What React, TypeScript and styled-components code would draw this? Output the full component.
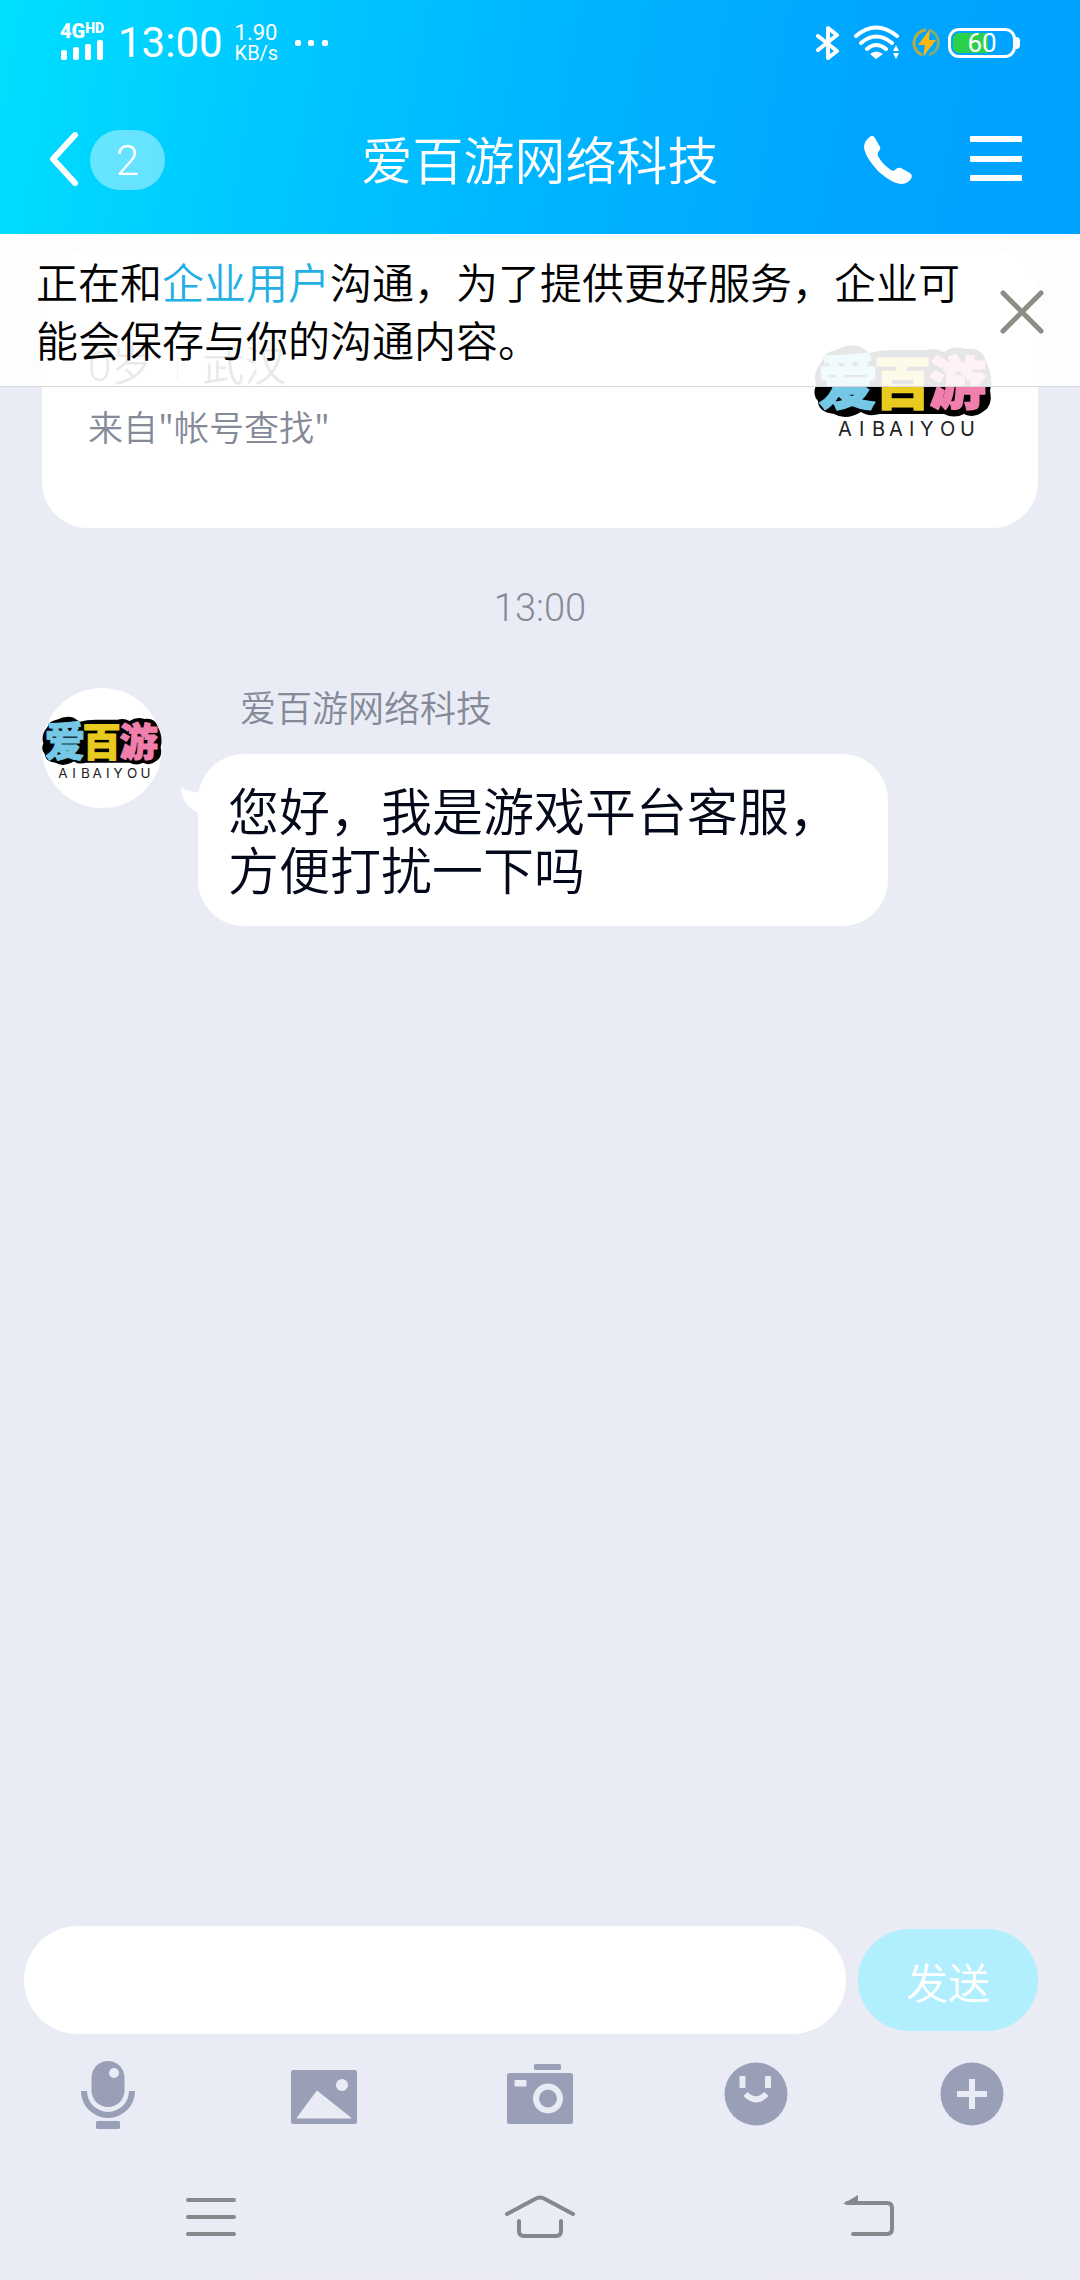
import React from 'react';
import styled, { createGlobalStyle } from 'styled-components';

const GlobalStyle = createGlobalStyle`
  * { box-sizing: border-box; }
  body {
    margin: 0;
    background: #e9ecf5;
    font-family: Roboto, "Noto Sans CJK SC", sans-serif;
    font-weight: 350;
  }
  button, input { font: inherit; border: 0; padding: 0; background: none; }
  svg { display: block; flex: none; }
`;

const Page = styled.div`
  display: flex;
  flex-direction: column;
  min-height: 100vh;
  background: linear-gradient(#e9ecf5 90%, #ebecf5);
`;

const Top = styled.header`
  color: #fff;
  background: linear-gradient(100deg, #00dfff 0%, #00c8ff 25%, #00b4ff 52%, #00a5ff 80%, #00a2ff 100%);
`;

const StatusBar = styled.div`
  display: flex;
  align-items: center;
  justify-content: space-between;
  height: 86px;
  padding: 0 60px;
`;

const StatusGroup = styled.div<{ $gap: number }>`
  display: flex;
  align-items: center;
  gap: ${(p) => p.$gap}px;
`;

const Signal = styled.div`
  display: flex;
  flex-direction: column;
  width: 46px;
  padding-bottom: 4px;
  font-weight: 900;
  font-size: 20px;
  line-height: 18px;
`;

const NetType = styled.span`
  display: flex;
  align-items: flex-start;
  small { font-size: 14px; line-height: 12px; }
`;

const Clock = styled.time`
  font-size: 42px;
  line-height: 48px;
  font-weight: 400;
`;

const Rate = styled.span`
  display: flex;
  flex-direction: column;
  font-size: 22px;
  line-height: 20px;
  font-weight: 400;
  small { font-size: 20px; }
`;

const Battery = styled.span`
  display: flex;
  align-items: center;
`;

const BatteryBody = styled.span`
  display: flex;
  align-items: center;
  justify-content: center;
  width: 68px;
  height: 30px;
  border: 3px solid #fff;
  border-radius: 11px;
  background: linear-gradient(90deg, #2bd14b 60%, transparent 60%) content-box;
  padding: 2px;
  font-size: 26px;
  line-height: 24px;
  font-weight: 400;
`;

const BatteryTip = styled.span`
  width: 4px;
  height: 12px;
  border-radius: 0 4px 4px 0;
  background: #fff;
`;

const TitleBar = styled.div`
  display: grid;
  grid-template-columns: 1fr auto 1fr;
  align-items: center;
  height: 148px;
  padding: 0 50px;
`;

const BackButton = styled.button`
  display: flex;
  align-items: center;
  gap: 12px;
  color: #fff;
  justify-self: start;
`;

const Unread = styled.span`
  width: 75px;
  height: 60px;
  border-radius: 30px;
  background: rgba(255, 255, 255, 0.4);
  font-size: 42px;
  line-height: 62px;
  text-align: center;
`;

const Title = styled.h1`
  margin: 0;
  padding-top: 6px;
  font-size: 51px;
  line-height: 60px;
  font-weight: inherit;
`;

const Actions = styled.div`
  display: flex;
  align-items: center;
  justify-content: flex-end;
  gap: 58px;
  padding-right: 8px;
`;

const IconButton = styled.button`
  display: flex;
  color: inherit;
`;

const Chat = styled.main`
  position: relative;
  display: flex;
  flex-direction: column;
  flex: 1;
  padding: 16px 42px 0;
`;

const Notice = styled.aside`
  position: absolute;
  top: 0;
  left: 0;
  right: 0;
  display: flex;
  align-items: center;
  justify-content: space-between;
  gap: 24px;
  padding: 22px 36px 14px;
  border-bottom: 1px solid #d9d9dc;
  background: rgba(255, 255, 255, 0.9);
  color: #8f8c86;
`;

const NoticeText = styled.p`
  margin: 0;
  max-width: 930px;
  color: #000;
  font-size: 42px;
  line-height: 58px;
`;

const NoticeLink = styled.a`
  color: #23b0e6;
  text-decoration: none;
`;

const Card = styled.section`
  display: flex;
  align-items: center;
  justify-content: space-between;
  padding: 53px 46px 47px;
  border-radius: 46px;
  background: #fff;
`;

const CardInfo = styled.div`
  padding-top: 8px;
  line-height: 60px;
`;

const CardFacts = styled.div`
  display: flex;
  align-items: center;
  gap: 24px;
  color: #222;
  font-size: 42px;
`;

const Divider = styled.span`
  width: 1px;
  height: 28px;
  background: #777;
`;

const CardSource = styled.div`
  color: #858a99;
  font-family: "Noto Sans CJK SC", sans-serif;
  font-size: 35px;
  line-height: 58px;
`;

const Stamp = styled.time`
  align-self: center;
  margin: 56px 0 54px;
  color: #858a99;
  font-size: 38px;
  line-height: 48px;
`;

const Message = styled.article`
  display: flex;
  align-items: flex-start;
  gap: 36px;
  margin-top: 2px;
`;

const Avatar = styled.div`
  width: 120px;
  height: 120px;
  border-radius: 50%;
  background: #fff;
`;

const Sender = styled.div`
  padding: 0 42px 22px;
  color: #858a99;
  font-size: 36px;
  line-height: 44px;
`;

const Bubble = styled.div`
  position: relative;
  width: fit-content;
  max-width: 690px;
  padding: 30px 48px 24px 30px;
  border-radius: 46px;
  background: #fff;
  color: #03081a;
  font-size: 51px;
  line-height: 59px;
`;

const Tail = styled.svg`
  position: absolute;
  left: -17px;
  top: 33px;
`;

const Composer = styled.form`
  display: flex;
  align-items: center;
  gap: 12px;
  padding: 0 42px 0 24px;
`;

const Field = styled.input`
  flex: 1;
  min-width: 0;
  height: 108px;
  padding: 0 40px;
  border-radius: 54px;
  background: #fff;
  font-size: 42px;
`;

const Send = styled.button`
  width: 180px;
  height: 102px;
  border-radius: 51px;
  background: #b1eefe;
  color: #fff;
  font-size: 42px;
`;

const Tools = styled.div`
  display: grid;
  grid-template-columns: repeat(5, 1fr);
  place-items: center;
  height: 120px;
  color: #999fb6;
`;

const SystemNav = styled.nav`
  display: flex;
  align-items: center;
  justify-content: space-between;
  height: 126px;
  padding: 0 186px;
  color: #87888b;
`;

const LOGO_GLYPHS = [
  { char: '爱', x: 4, y: 101, size: 60, color: '#74c8e6' },
  { char: '百', x: 60, y: 101, size: 57, color: '#e9cb1f' },
  { char: '游', x: 115, y: 101, size: 57, color: '#f07fae' },
];

function Logo({ size }: { size: number }) {
  return (
    <svg width={size} height={size} viewBox="0 0 178 178" overflow="visible" role="img" aria-label="爱百游 AIBAIYOU">
      <path
        d="M8 58Q10 49 22 47Q36 40 47 44L56 50Q66 47 80 47H112Q122 44 130 49Q140 42 152 46Q168 44 172 58Q180 74 176 88Q179 102 170 108Q160 116 150 111Q140 116 130 111H66Q54 114 47 109Q32 118 20 111Q4 109 4 98Q-2 92 2 82Q-2 70 8 58Z"
        fill="#000"
      />
      <g fontFamily='"Noto Sans CJK SC"' fontWeight="900" strokeLinejoin="round" strokeWidth="1.5">
        {LOGO_GLYPHS.map((g) => (
          <text key={g.char} x={g.x} y={g.y} fontSize={g.size} fill={g.color} stroke={g.color}>
            {g.char}
          </text>
        ))}
      </g>
      <text x="24 45 58 75 95 106 126 146" y="133" fontFamily="Inter" fontWeight="400" fontSize="20" fill="#222">
        AIBAIYOU
      </text>
    </svg>
  );
}

export default function App() {
  return (
    <Page>
      <GlobalStyle />
      <Top>
        <StatusBar>
          <StatusGroup $gap={12}>
            <Signal>
              <NetType>4G<small>HD</small></NetType>
              <svg width="44" height="20" viewBox="0 0 44 20" fill="currentColor">
                <rect x="1" y="10" width="6" height="10" rx="2" />
                <rect x="13" y="7" width="6" height="13" rx="2" />
                <rect x="25" y="4" width="6" height="16" rx="2" />
                <rect x="37" y="0" width="6" height="20" rx="2" />
              </svg>
            </Signal>
            <Clock>13:00</Clock>
            <Rate>
              <span>1.90</span>
              <small>KB/s</small>
            </Rate>
            <svg width="40" height="8" viewBox="0 0 40 8" fill="currentColor">
              <rect x="5" y="1" width="6" height="6" rx="2" />
              <rect x="18" y="1" width="6" height="6" rx="2" />
              <rect x="32" y="1" width="6" height="6" rx="2" />
            </svg>
          </StatusGroup>
          <StatusGroup $gap={12}>
            <svg width="24" height="36" viewBox="0 0 24 36" fill="none" stroke="currentColor" strokeWidth="4" strokeLinecap="round" strokeLinejoin="round">
              <path d="M2 11L21 26L12 33V3L21 10L2 25" />
            </svg>
            <svg width="48" height="36" viewBox="0 0 48 36" fill="none" stroke="currentColor" strokeWidth="4" strokeLinecap="round">
              <path d="M4 11Q24 -6 45 11M9 18Q24 5 40 18M15 24Q24 16 34 24" />
              <path d="M18 29Q24 24 31 29L24 34Z" fill="currentColor" stroke="none" />
              <path d="M41 26L44 20L47 26ZM41 28H47L44 34Z" fill="currentColor" stroke="none" />
            </svg>
            <StatusGroup $gap={6}>
              <svg width="30" height="30" viewBox="0 0 30 30" fill="none">
                <path d="M14 2A13 13 0 0 0 10 27" stroke="#b5ab43" strokeWidth="3" />
                <path d="M17 2A13 13 0 0 1 17 27" stroke="#7fab7a" strokeWidth="3" />
                <path d="M18 1L6 17H13L11 29L24 12H17Z" fill="#fdb515" />
              </svg>
              <Battery>
                <BatteryBody>60</BatteryBody>
                <BatteryTip />
              </Battery>
            </StatusGroup>
          </StatusGroup>
        </StatusBar>
        <TitleBar>
          <BackButton aria-label="返回">
            <svg width="28" height="56" viewBox="0 0 28 56" fill="none" stroke="currentColor" strokeWidth="6" strokeLinecap="round" strokeLinejoin="round">
              <path d="M25 3L3 27L25 51" />
            </svg>
            <Unread>2</Unread>
          </BackButton>
          <Title>爱百游网络科技</Title>
          <Actions>
            <IconButton aria-label="语音通话">
              <svg width="48" height="48" viewBox="0 0 48 48" fill="currentColor">
                <path d="M7 0Q9 -1 11 2L16 11Q17 13 15 15Q13 17 14 20Q18 28 27 34Q30 36 32 33Q34 31 37 32L46 37Q49 39 47 43Q43 48 37 48Q29 48 15 36Q0 20 0 10Q1 4 7 0Z" />
              </svg>
            </IconButton>
            <IconButton aria-label="菜单">
              <svg width="52" height="48" viewBox="0 0 52 48" fill="currentColor">
                <rect y="0" width="52" height="6" rx="1" />
                <rect y="20" width="52" height="6" rx="1" />
                <rect y="39" width="52" height="6" rx="1" />
              </svg>
            </IconButton>
          </Actions>
        </TitleBar>
      </Top>

      <Chat>
        <Card>
          <CardInfo>
            <CardFacts>
              <span>0岁</span>
              <Divider />
              <span>武汉</span>
            </CardFacts>
            <CardSource>来自"帐号查找"</CardSource>
          </CardInfo>
          <Logo size={178} />
        </Card>
        <Stamp>13:00</Stamp>
        <Message>
          <Avatar>
            <Logo size={120} />
          </Avatar>
          <div>
            <Sender>爱百游网络科技</Sender>
            <Bubble>
              <Tail width="20" height="28" viewBox="0 0 20 28" fill="#fff">
                <path d="M0 0Q8 6 20 5V27Q1 20 0 0Z" />
              </Tail>
              您好，我是游戏平台客服，方便打扰一下吗
            </Bubble>
          </div>
        </Message>
        <Notice>
          <NoticeText>
            正在和<NoticeLink href="#">企业用户</NoticeLink>沟通，为了提供更好服务，企业可能会保存与你的沟通内容。
          </NoticeText>
          <IconButton aria-label="关闭">
            <svg width="44" height="48" viewBox="0 0 44 48" fill="none" stroke="currentColor" strokeWidth="5" strokeLinecap="round">
              <path d="M3 3L41 41M41 3L3 41" />
            </svg>
          </IconButton>
        </Notice>
      </Chat>

      <Composer onSubmit={(e) => e.preventDefault()}>
        <Field aria-label="输入消息" />
        <Send type="submit">发送</Send>
      </Composer>
      <Tools>
        <IconButton aria-label="语音">
          <svg width="72" height="72" viewBox="0 0 72 72" fill="currentColor">
            <rect x="19.5" y="3" width="33" height="46" rx="16.5" />
            <circle cx="42" cy="15" r="5" fill="#e9ecf5" />
            <path d="M12 33A24 24 0 0 0 60 33" fill="none" stroke="currentColor" strokeWidth="6" />
            <rect x="24" y="63" width="24" height="8" rx="1.5" />
          </svg>
        </IconButton>
        <IconButton aria-label="图片">
          <svg width="72" height="72" viewBox="0 0 72 72" fill="currentColor">
            <rect x="3" y="12" width="66" height="54" rx="2.5" />
            <circle cx="54" cy="27" r="6" fill="#e9ecf5" />
            <path d="M9 60L29 33L63 60Z" fill="#e9ecf5" stroke="#e9ecf5" strokeLinejoin="round" />
          </svg>
        </IconButton>
        <IconButton aria-label="拍照">
          <svg width="72" height="72" viewBox="0 0 72 72" fill="currentColor">
            <rect x="30" y="6" width="27" height="6" rx="1.5" />
            <rect x="3" y="15" width="66" height="51" rx="2.5" />
            <rect x="10.5" y="22" width="12" height="6.5" rx="1" fill="#e9ecf5" />
            <circle cx="44" cy="40.5" r="12" fill="none" stroke="#e9ecf5" strokeWidth="6" />
          </svg>
        </IconButton>
        <IconButton aria-label="表情">
          <svg width="72" height="72" viewBox="0 0 72 72" fill="currentColor">
            <circle cx="36" cy="36" r="31.5" />
            <rect x="19.5" y="18" width="6" height="12" rx="1" fill="#e9ecf5" />
            <rect x="45" y="18" width="6" height="12" rx="1" fill="#e9ecf5" />
            <path d="M25.5 36Q36 46.5 46.5 36" fill="none" stroke="#e9ecf5" strokeWidth="6" />
          </svg>
        </IconButton>
        <IconButton aria-label="更多">
          <svg width="72" height="72" viewBox="0 0 72 72" fill="currentColor">
            <circle cx="36" cy="36" r="31.5" />
            <path d="M21 36H51M36 21V51" stroke="#e9ecf5" strokeWidth="6" />
          </svg>
        </IconButton>
      </Tools>
      <SystemNav>
        <IconButton aria-label="最近任务">
          <svg width="50" height="44" viewBox="0 0 50 44" fill="none" stroke="currentColor" strokeWidth="4" strokeLinecap="round">
            <path d="M2 5H48M2 22H48M2 39H48" />
          </svg>
        </IconButton>
        <IconButton aria-label="主屏幕">
          <svg width="70" height="44" viewBox="0 0 70 44" fill="none" stroke="currentColor" strokeWidth="4" strokeLinecap="round">
            <path d="M2 19L30 4Q35 1 40 4L68 19M14 26V36Q14 41 19 41H51Q56 41 56 36V26" />
          </svg>
        </IconButton>
        <IconButton aria-label="返回上一级">
          <svg width="51" height="44" viewBox="0 0 51 44" fill="none" stroke="currentColor" strokeWidth="4" strokeLinecap="round">
            <path d="M4 8H44Q49 8 49 13V34Q49 39 44 39H10" />
            <path d="M0 9L15 0V9Z" fill="currentColor" stroke="none" />
          </svg>
        </IconButton>
      </SystemNav>
    </Page>
  );
}
